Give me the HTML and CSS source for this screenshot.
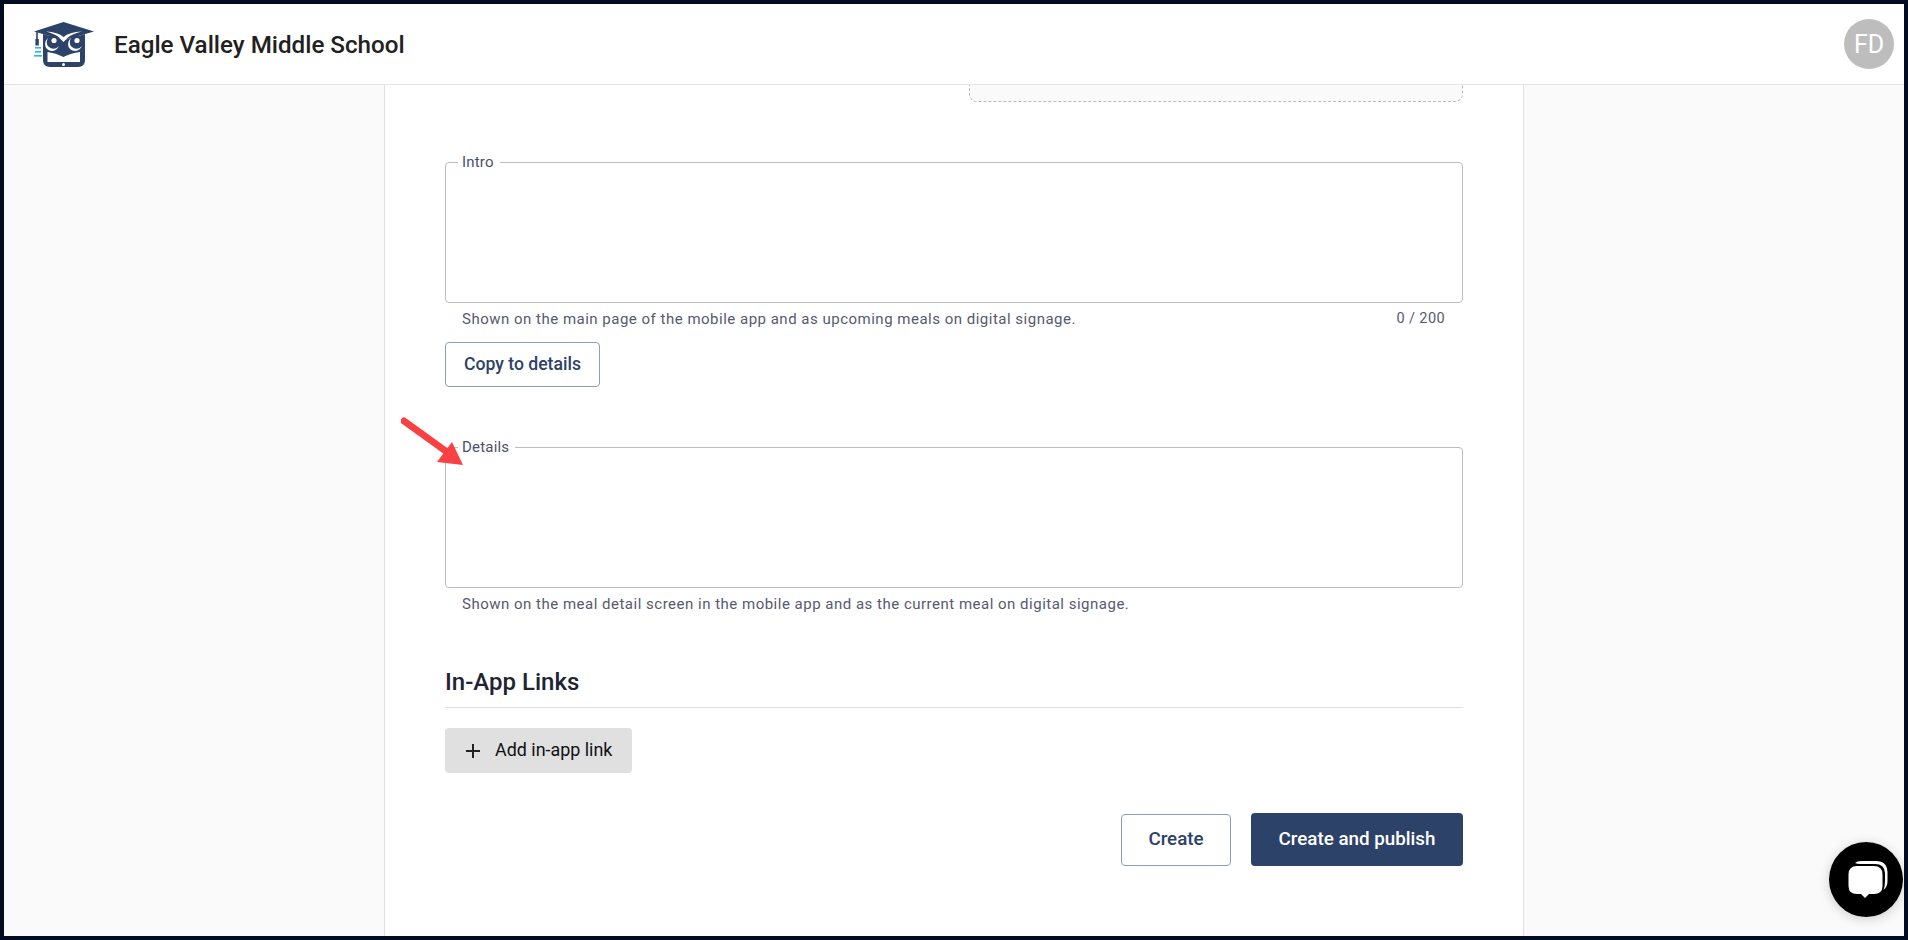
FILE: index.html
```html
<!DOCTYPE html>
<html lang="en">
<head>
<meta charset="utf-8">
<title>Eagle Valley Middle School</title>
<link rel="stylesheet" href="styles.css">
</head>
<body>
<div class="frame">
  <header class="topbar">
    <svg class="logo" width="62" height="46" viewBox="0 0 62 46" aria-hidden="true">
      <rect x="1" y="25" width="6" height="1.6" fill="#29b6e8"/>
      <rect x="1" y="29" width="6" height="1.6" fill="#29b6e8"/>
      <rect x="0" y="33" width="8" height="1.6" fill="#29b6e8"/>
      <path d="M0 9.5 L29.5 0 L60 9.5 L30 18 Z" fill="#2c4268"/>
      <path d="M3 10 V20" stroke="#2c4268" stroke-width="1.6" fill="none"/>
      <rect x="1.4" y="17" width="3.4" height="6.5" fill="#2c4268"/>
      <path d="M9 12 L30 18 L51 12 V38 Q51 45 44 45 H16 Q9 45 9 38 Z" fill="#2c4268"/>
      <path d="M13.5 30 Q22 31 29.5 35 Q37 31 46 30 V40 H13.5 Z" fill="#fff"/>
      <path d="M12 9.5 Q24 10 29.5 15 Q35 10 48 9.5 Q38 12 34 15.5 L29.5 20 L25 15.5 Q21 12 12 9.5 Z" fill="#fff"/>
      <circle cx="18" cy="22" r="7" fill="#fff"/>
      <circle cx="41" cy="22" r="7" fill="#fff"/>
      <circle cx="19.5" cy="20" r="6.8" fill="#2c4268"/>
      <circle cx="42.5" cy="20" r="6.8" fill="#2c4268"/>
      <circle cx="20" cy="18.5" r="2.6" fill="#fff"/>
      <circle cx="43" cy="18.5" r="2.6" fill="#fff"/>
      <circle cx="29.5" cy="42.5" r="1.5" fill="#fff"/>
    </svg>
    <div class="school">Eagle Valley Middle School</div>
    <div class="avatar">FD</div>
  </header>
  <main class="content">
    <section class="panel">
      <div class="upload-row"><div class="upload"></div></div>

      <div class="field field-intro">
        <span class="field-label">Intro</span>
      </div>
      <div class="hint-row">
        <span>Shown on the main page of the mobile app and as upcoming meals on digital signage.</span>
        <span class="count">0 / 200</span>
      </div>
      <button class="btn btn-outline btn-copy" type="button">Copy to details</button>

      <div class="field field-details">
        <span class="field-label">Details</span>
        <svg class="arrow" width="66" height="56" viewBox="0 0 66 56" aria-hidden="true">
          <path d="M3 6 L46 37" stroke="#f94144" stroke-width="7" stroke-linecap="round" fill="none"/>
          <path d="M62 50 L36 47 L51 27 Z" fill="#f94144"/>
        </svg>
      </div>
      <div class="hint-row">
        <span>Shown on the meal detail screen in the mobile app and as the current meal on digital signage.</span>
      </div>

      <h2 class="section-title">In-App Links</h2>
      <button class="btn btn-add" type="button">
        <svg width="16" height="16" viewBox="0 0 16 16" aria-hidden="true"><path d="M8 1 V15 M1 8 H15" stroke="#222" stroke-width="2" fill="none"/></svg>
        <span>Add in-app link</span>
      </button>

      <div class="actions">
        <button class="btn btn-outline btn-create" type="button">Create</button>
        <button class="btn btn-primary" type="button">Create and publish</button>
      </div>
    </section>
    <button class="chat" type="button" aria-label="Chat">
      <svg class="chat-icon" width="40" height="37" viewBox="0 0 40 37" aria-hidden="true">
        <path d="M7 2 Q9 0 13 0 H28 Q39 0 39.5 11 V20 Q39.5 26 35.5 29 Q37 25 37 20 V12 Q36.5 3 27 3 H12 Q9 3 7 2 Z" fill="#fff"/>
        <path d="M9 5 H26 Q34.5 5 34.5 13.5 V25 Q34.5 33 26 33 H21 L17 37 L13 33 H9 Q0.5 33 0.5 25 V13.5 Q0.5 5 9 5 Z" fill="#fff"/>
      </svg>
    </button>
  </main>
</div>
</body>
</html>
```
FILE: styles.css
```css
* { box-sizing: border-box; }
html, body { margin: 0; height: 100%; }
body { font-family: Roboto, "Liberation Sans", sans-serif; color: #212121; }

.frame {
  height: 940px;
  border: 4px solid #020b1f;
  display: flex;
  flex-direction: column;
  overflow: hidden;
  background: #fafafa;
}

.topbar {
  height: 81px;
  flex: none;
  display: flex;
  align-items: center;
  background: #fff;
  border-bottom: 1px solid #e5e5e5;
  padding: 0 10px 0 30px;
}
.logo { flex: none; margin-top: 2px; }
.school { margin: 2px 0 0 18px; font-size: 24.2px; font-weight: 500; line-height: 32px; color: #212121; }
.avatar {
  margin-left: auto;
  width: 50px; height: 50px;
  border-radius: 50%;
  background: #bdbdbd;
  color: #fff;
  font-size: 25px;
  display: flex; align-items: center; justify-content: center;
}

.content { position: relative; flex: 1; min-height: 0; display: flex; justify-content: center; }
.panel {
  width: 1140px;
  background: #fff;
  border-left: 1px solid #e0e0e0;
  border-right: 1px solid #e0e0e0;
  padding: 0 60px;
  display: flex;
  flex-direction: column;
  align-items: flex-start;
}

.upload-row { width: 100%; display: flex; justify-content: flex-end; }
.upload {
  width: 494px; height: 17px;
  background: #fafafa;
  border: 1px dashed #bdbdbd;
  border-top: 0;
  border-radius: 0 0 8px 8px;
}

.field {
  position: relative;
  width: 100%;
  height: 141px;
  border: 1px solid #bdbdbd;
  border-radius: 4px;
  flex: none;
}
.field-intro { margin-top: 60px; }
.field-details { margin-top: 60px; }
.field-label {
  position: absolute;
  top: -10px; left: 12px;
  padding: 0 6px 0 4px;
  background: #fff;
  font-size: 15px;
  line-height: 18px;
  letter-spacing: 0.2px;
  color: #4b506b;
}
.arrow { position: absolute; left: -45px; top: -33px; }

.hint-row {
  width: 100%;
  display: flex;
  justify-content: space-between;
  padding: 6px 18px 0 17px;
  font-size: 15px;
  line-height: 20px;
  letter-spacing: 0.5px;
  color: #555a70;
}
.count { font-size: 14.5px; letter-spacing: 0.4px; }

.btn {
  font-family: inherit;
  font-weight: 500;
  border-radius: 4px;
  cursor: pointer;
  padding: 0 0 2px;
}
.btn-outline { background: #fff; border: 1px solid #8f9db5; color: #2c4268; }
.btn-copy { width: 155px; height: 45px; margin-top: 13px; font-size: 17.6px; }
.section-title {
  width: 100%;
  margin: 53px 0 0;
  padding-bottom: 10px;
  border-bottom: 1px solid #e0e0e0;
  font-size: 24px;
  line-height: 30px;
  font-weight: 500;
  color: #212332;
}
.btn-add {
  margin-top: 20px;
  width: 187px; height: 45px;
  background: #e0e0e0;
  border: 0;
  color: #111;
  display: flex; align-items: center; gap: 14px;
  padding: 0 0 0 20px;
  font-size: 17.9px;
  font-weight: 400;
}
.btn-add span { position: relative; top: -1px; }
.actions { width: 100%; display: flex; justify-content: flex-end; align-items: flex-end; gap: 20px; margin-top: 40px; }
.btn-create { width: 110px; height: 52px; font-size: 18.8px; }
.btn-primary { width: 212px; height: 53px; background: #2c4268; border: 0; color: #fff; font-size: 18.8px; }

.chat {
  position: absolute;
  right: 1px; bottom: 19px;
  width: 74px; height: 75px;
  border: 0; padding: 0;
  border-radius: 50%;
  background: #000;
  box-shadow: 0 2px 12px rgba(0,0,0,.18);
  display: flex; align-items: center; justify-content: center;
}
.chat-icon { margin-left: 3px; }
```
